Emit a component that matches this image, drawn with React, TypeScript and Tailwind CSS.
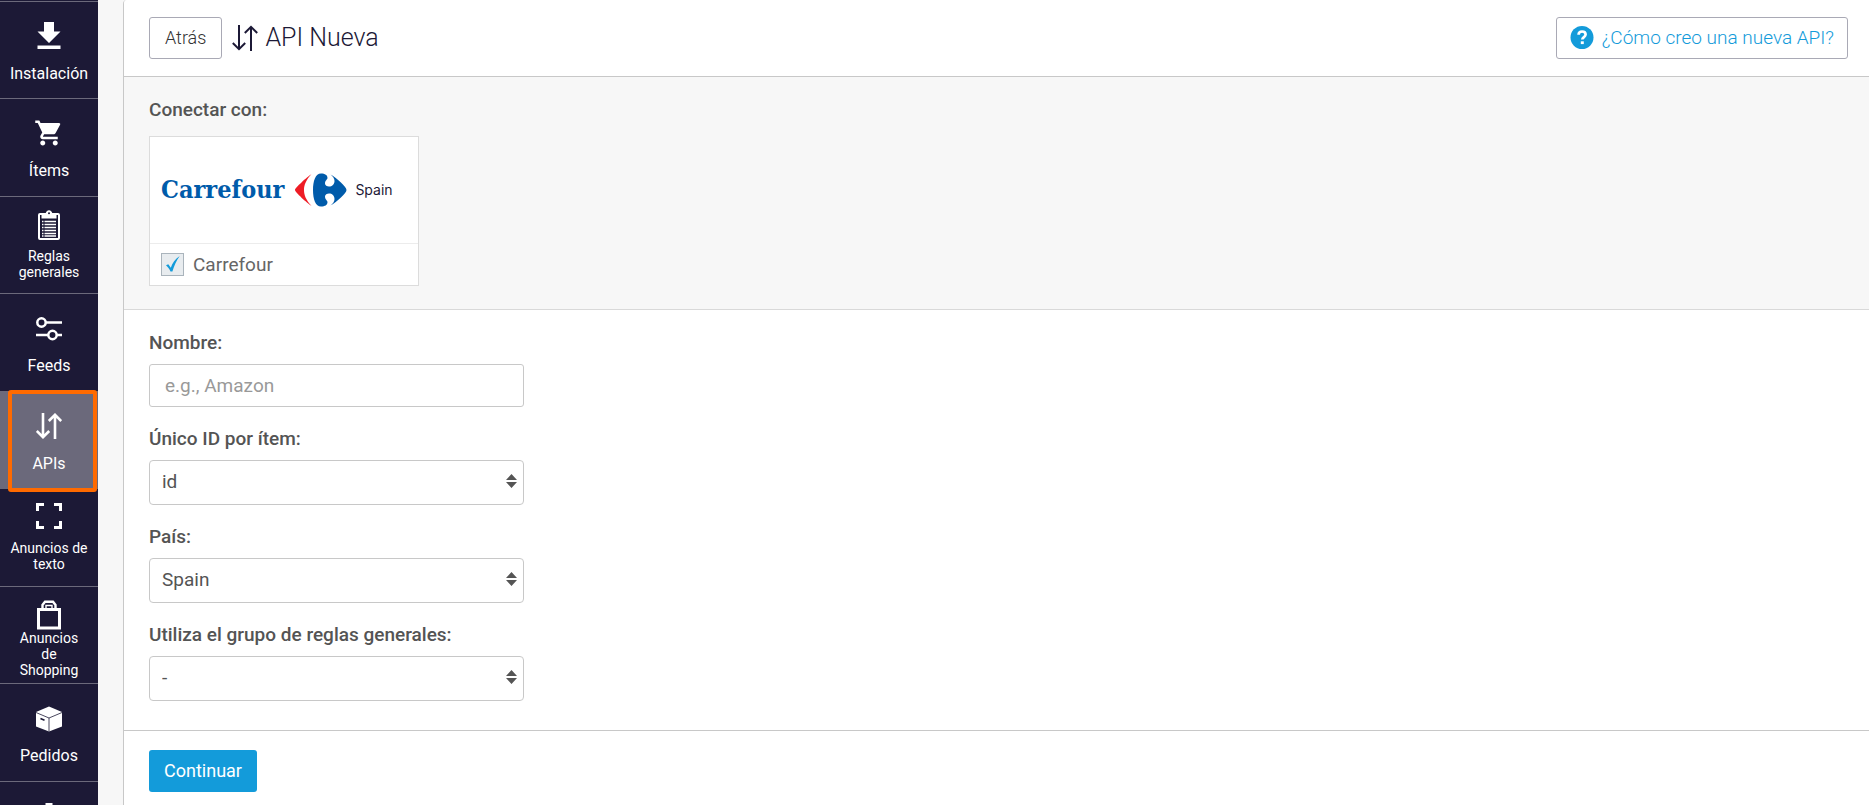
import React, { useState } from "react";
import { MdShoppingCart } from "react-icons/md";

type Density = "normal" | "compact" | "dense";

function DownloadIcon() {
  return (
    <svg width="24" height="28" viewBox="0 0 24 28" fill="currentColor" aria-hidden="true">
      <path d="M7 0h10v9.500h6.500L12 21 .500 9.500H7z" />
      <path d="M.500 23.500h23V27H.500z" />
    </svg>
  );
}

function CartIcon() {
  return <MdShoppingCart size={30} aria-hidden="true" />;
}

function ClipboardIcon() {
  return (
    <svg width="22" height="30" viewBox="0 0 22 30" fill="none" stroke="currentColor" aria-hidden="true">
      <rect x="1" y="4" width="20" height="25" rx="1" strokeWidth="2" />
      <path d="M3.500 8.500V4h4C8 1.500 9.300.300 11 .300S14 1.500 14.500 4h4v4.500z" fill="currentColor" stroke="none" />
      <circle cx="11" cy="3.300" r="1" fill="#1c1936" stroke="none" />
      <path d="M4 11.500h1.500M6.500 11.500H18M4 14.500h1.500M6.500 14.500H18M4 17.500h1.500M6.500 17.500H18M4 20.500h1.500M6.500 20.500H18M4 23.500h1.500M6.500 23.500H18M4 26h1.500M6.500 26H18" strokeWidth="1.700" />
    </svg>
  );
}

function SlidersIcon() {
  return (
    <svg width="26" height="26" viewBox="0 -2 26 26" fill="none" stroke="currentColor" strokeWidth="2.500" aria-hidden="true">
      <circle cx="5.500" cy="5.500" r="4.200" />
      <path d="M10 5.500h16M0 18h12M21 18h5" />
      <circle cx="16.500" cy="18" r="4.200" />
    </svg>
  );
}

function SwapIcon({ thin = false }: { thin?: boolean }) {
  return (
    <svg width="26" height="26" viewBox="0 0 26 26" fill="none" stroke="currentColor" strokeWidth={thin ? 2 : 2.6} aria-hidden="true">
      <path d="M7 0v24M.800 18L7 24.200 13.200 18M19 26V2M12.800 8L19 1.800 25.200 8" />
    </svg>
  );
}

function CornersIcon() {
  return (
    <svg width="26" height="28" viewBox="0 0 26 28" fill="none" stroke="currentColor" strokeWidth="3" aria-hidden="true">
      <path d="M1.500 8V1.500H8M18 1.500h6.500V8M24.500 18v6.500H18M8 24.500H1.500V18" />
    </svg>
  );
}

function BagIcon() {
  return (
    <svg width="24" height="30" viewBox="0 0 24 30" fill="none" stroke="currentColor" aria-hidden="true">
      <path d="M1.500 9.500h21v18.500h-21z" strokeWidth="3" />
      <path d="M5.500 8V5L8 1.800h8L18.500 5v3" strokeWidth="2.400" />
      <path d="M9 8V5.500h6V8" strokeWidth="1.400" />
    </svg>
  );
}

function BoxIcon() {
  return (
    <svg width="28" height="28" viewBox="0 -2 28 28" aria-hidden="true">
      <path d="M14 .500L27 6v14.500L14 25.500 1 20.500V6z" fill="currentColor" />
      <path d="M1 6.500L14 12l13-5.500M14 12v13.500" fill="none" stroke="#1c1936" strokeWidth=".8" />
      <path d="M5.500 12.500l4 1.700" stroke="#1c1936" strokeWidth="1.600" />
    </svg>
  );
}

function UserIcon() {
  return (
    <svg width="24" height="28" viewBox="0 0 24 28" fill="currentColor" aria-hidden="true">
      <path d="M8.500 1h7v9h-7zM1 12h22v15H1z" />
    </svg>
  );
}

const items: { label: string; icon: React.ReactNode; density: Density; active?: boolean }[] = [
  { label: "Instalación", icon: <DownloadIcon />, density: "normal" },
  { label: "Ítems", icon: <CartIcon />, density: "normal" },
  { label: "Reglas generales", icon: <ClipboardIcon />, density: "compact" },
  { label: "Feeds", icon: <SlidersIcon />, density: "normal" },
  { label: "APIs", icon: <SwapIcon />, density: "normal", active: true },
  { label: "Anuncios de texto", icon: <CornersIcon />, density: "compact" },
  { label: "Anuncios de Shopping", icon: <BagIcon />, density: "dense" },
  { label: "Pedidos", icon: <BoxIcon />, density: "normal" },
  { label: "", icon: <UserIcon />, density: "normal" },
];

const linkStyle: Record<Density, string> = {
  normal: "pt-5",
  compact: "pt-[13px] px-2",
  dense: "pt-[13px] px-4",
};
const iconStyle: Record<Density, string> = {
  normal: "h-7",
  compact: "h-[30px]",
  dense: "h-[30px]",
};
const labelStyle: Record<Density, string> = {
  normal: "mt-3 text-base leading-6",
  compact: "mt-2 text-sm leading-4",
  dense: "text-sm leading-4",
};

function Sidebar() {
  return (
    <nav className="w-[98px] shrink-0 overflow-hidden bg-[#1c1936] pt-px text-white">
      <ul>
        {items.map((item, i) => (
          <li key={i} className="relative odd:h-[97px] even:h-[98px]">
            <a
              href="#"
              className={`flex h-full flex-col items-center border-t border-[#6b697b] text-center ${linkStyle[item.density]} ${item.active ? "bg-[#6b697b]" : ""}`}
            >
              <span className={`flex items-center justify-center ${iconStyle[item.density]}`}>{item.icon}</span>
              <span className={labelStyle[item.density]}>{item.label}</span>
            </a>
            {item.active && (
              <span className="pointer-events-none absolute -top-px right-px -bottom-1 left-2 z-10 rounded-[3px] border-4 border-[#ff6a00]" />
            )}
          </li>
        ))}
      </ul>
    </nav>
  );
}

function CarrefourMark() {
  return (
    <svg width="52" height="34" viewBox="0 0 52 34" aria-hidden="true">
      <path d="M16.500 1C12 4 0 15 0 17s12 13 16.500 16C11 27 9 22 9 17S11 7 16.500 1z" fill="#ee1c25" />
      <path
        d="M26 .500c4 0 6.500 1.500 6.500 4.500 0 1.500-2.500 2.500-2.500 5.500 0 2 2 3 4 3 3 0 5.500-2 5.500-5.500 0-2.500-1.500-4.500-4-6.500C42 5 51.500 14 51.500 17S42 29 35.500 32.500c2.500-2 4-4 4-6.500 0-3.500-2.500-5.500-5.500-5.500-2 0-4 1-4 3 0 3 2.500 4 2.500 5.500 0 3-2.500 4.500-6.500 4.500-5.500 0-8-7.500-8-16.500S20.500.500 26 .500z"
        fill="#005baa"
      />
    </svg>
  );
}

function SelectField({ id, label, options }: { id: string; label: string; options: string[] }) {
  return (
    <div>
      <label htmlFor={id} className="mb-[9px] block font-medium">
        {label}
      </label>
      <div className="relative">
        <select
          id={id}
          className="block h-[45px] w-full appearance-none rounded-[4px] border border-[#c8c8c8] bg-white px-3 pb-0.5"
        >
          {options.map((o) => (
            <option key={o}>{o}</option>
          ))}
        </select>
        <svg
          className="pointer-events-none absolute top-3.5 right-[7px]"
          width="11"
          height="14"
          viewBox="0 0 12 14"
          preserveAspectRatio="none"
          fill="#555"
          aria-hidden="true"
        >
          <path d="M6 0l6 6H0zM6 14l6-6H0z" />
        </svg>
      </div>
    </div>
  );
}

export default function App() {
  const [checked, setChecked] = useState(true);
  return (
    <div className="flex h-screen overflow-hidden bg-[#f7f7f7] font-['Roboto',sans-serif] text-[19px] leading-6 text-[#545454]">
      <Sidebar />
      <main className="ml-[25px] min-w-0 flex-1 overflow-y-auto rounded-tl-[4px] border-l border-[#c8c8c8] bg-white">
        <header className="flex items-center border-b border-[#c8c8c8] py-[17px] pr-[21px] pl-[25px]">
          <button className="h-[42px] rounded-[3px] border border-[#a9a9b5] bg-white px-[15px] text-lg font-light text-[#333]">
            Atrás
          </button>
          <h1 className="ml-2.5 flex items-center gap-[7px] text-[25px] font-light text-[#1c1936]">
            <SwapIcon thin />
            API Nueva
          </h1>
          <a
            href="#"
            className="ml-auto flex h-[42px] items-center gap-2 rounded-[3px] border border-[#a9a9b5] bg-white px-[13px] font-light text-[#139bda]"
          >
            <svg width="24" height="24" viewBox="0 0 24 24" aria-hidden="true">
              <circle cx="12" cy="11.500" r="11.500" fill="#139bda" />
              <path d="M8.600 8.700c0-2 1.500-3.200 3.500-3.200s3.500 1.200 3.500 3c0 2.500-3.300 2.600-3.300 5" fill="none" stroke="#fff" strokeWidth="2.700" />
              <path d="M10.800 15.300h3v2.800h-3z" fill="#fff" />
            </svg>
            ¿Cómo creo una nueva API?
          </a>
        </header>

        <section className="border-b border-[#d9d9d9] bg-[#f7f7f7] px-[25px] pt-[21px] pb-[23px]">
          <h2 className="mb-3.5 font-medium">Conectar con:</h2>
          <label className="block w-[270px] border border-[#dcdcdc] bg-white">
            <span className="flex h-[107px] items-center border-b border-[#ececec] pl-[11px]">
              <span className="font-['DejaVu_Serif_Condensed','DejaVu_Serif',serif] text-[25px] font-bold text-[#005baa]">
                Carrefour
              </span>
              <span className="ml-[11px]">
                <CarrefourMark />
              </span>
              <span className="ml-2 font-['Inter',sans-serif] text-sm text-[#1c1936]">Spain</span>
            </span>
            <span className="flex h-[41px] items-center gap-[9px] pl-[11px] text-[#666]">
              <span className="relative flex size-[23px]">
                <input
                  type="checkbox"
                  checked={checked}
                  onChange={() => setChecked(!checked)}
                  className="size-full appearance-none border border-[#aab4bc] bg-[#e8ecef]"
                />
                {checked && (
                  <svg className="pointer-events-none absolute inset-0" width="23" height="23" viewBox="0 0 23 23" aria-hidden="true">
                    <path d="M5 12.200l2.300-.900 2.500 3.500C11.500 10 14 6 18.700 3c-3.300 4.500-5.500 9.500-7.300 15.500H9.500C8.500 16 7 14 5 12.200z" fill="#139bda" />
                  </svg>
                )}
              </span>
              Carrefour
            </span>
          </label>
        </section>

        <form onSubmit={(e) => e.preventDefault()}>
          <div className="border-b border-[#c8c8c8] px-[25px] pt-[21px] pb-[29px]">
            <div className="flex w-full max-w-[375px] flex-col gap-5">
              <div>
                <label htmlFor="name" className="mb-[9px] block font-medium">
                  Nombre:
                </label>
                <input
                  id="name"
                  type="text"
                  placeholder="e.g., Amazon"
                  className="block h-[43px] w-full rounded-[3px] border border-[#c8c8c8] bg-white px-[15px] placeholder:text-[#999]"
                />
              </div>
              <SelectField id="uid" label="Único ID por ítem:" options={["id"]} />
              <SelectField id="country" label="País:" options={["Spain"]} />
              <SelectField id="rules" label="Utiliza el grupo de reglas generales:" options={["-"]} />
            </div>
          </div>
          <div className="px-[25px] py-[19px]">
            <button type="submit" className="h-[42px] rounded-[3px] bg-[#139bda] px-[15px] text-lg text-white">
              Continuar
            </button>
          </div>
        </form>
      </main>
    </div>
  );
}
